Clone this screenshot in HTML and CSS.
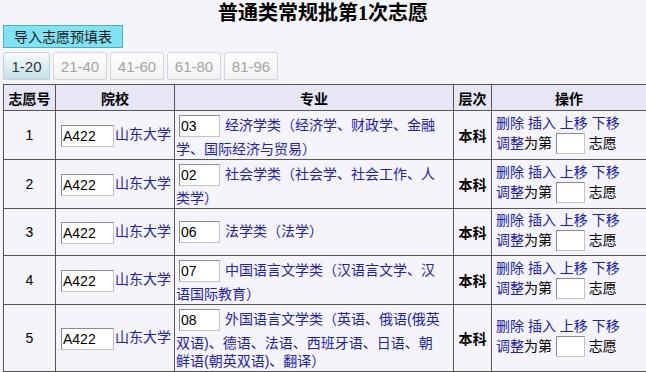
FILE: index.html
```html
<!DOCTYPE html>
<html lang="zh-CN">
<head>
<meta charset="utf-8">
<title>普通类常规批第1次志愿</title>
<link rel="stylesheet" href="styles.css">
</head>
<body>
<h1 class="title">普通类常规批第1次志愿</h1>
<button class="import" type="button">导入志愿预填表</button>
<div class="tabs">
  <div class="tab active">1-20</div>
  <div class="tab">21-40</div>
  <div class="tab">41-60</div>
  <div class="tab">61-80</div>
  <div class="tab">81-96</div>
</div>
<table class="grid">
  <colgroup>
    <col class="w-no"><col class="w-school"><col class="w-major"><col class="w-level"><col class="w-op">
  </colgroup>
  <thead>
    <tr><th>志愿号</th><th>院校</th><th>专业</th><th>层次</th><th>操作</th></tr>
  </thead>
  <tbody>
    <tr>
      <td class="c-no">1</td>
      <td class="c-school"><input class="in-school" value="A422"><a href="#" class="lnk">山东大学</a></td>
      <td class="c-major"><input class="in-major" value="03"><a href="#" class="lnk">经济学类（经济学、财政学、金融学、国际经济与贸易）</a></td>
      <td class="c-level">本科</td>
      <td class="c-op"><a href="#" class="lnk">删除</a> <a href="#" class="lnk">插入</a> <a href="#" class="lnk">上移</a> <a href="#" class="lnk">下移</a><br><a href="#" class="lnk">调整</a>为第 <input class="in-pos"> 志愿</td>
    </tr>
    <tr>
      <td class="c-no">2</td>
      <td class="c-school"><input class="in-school" value="A422"><a href="#" class="lnk">山东大学</a></td>
      <td class="c-major"><input class="in-major" value="02"><a href="#" class="lnk">社会学类（社会学、社会工作、人类学）</a></td>
      <td class="c-level">本科</td>
      <td class="c-op"><a href="#" class="lnk">删除</a> <a href="#" class="lnk">插入</a> <a href="#" class="lnk">上移</a> <a href="#" class="lnk">下移</a><br><a href="#" class="lnk">调整</a>为第 <input class="in-pos"> 志愿</td>
    </tr>
    <tr>
      <td class="c-no">3</td>
      <td class="c-school"><input class="in-school" value="A422"><a href="#" class="lnk">山东大学</a></td>
      <td class="c-major"><input class="in-major" value="06"><a href="#" class="lnk">法学类（法学）</a></td>
      <td class="c-level">本科</td>
      <td class="c-op"><a href="#" class="lnk">删除</a> <a href="#" class="lnk">插入</a> <a href="#" class="lnk">上移</a> <a href="#" class="lnk">下移</a><br><a href="#" class="lnk">调整</a>为第 <input class="in-pos"> 志愿</td>
    </tr>
    <tr>
      <td class="c-no">4</td>
      <td class="c-school"><input class="in-school" value="A422"><a href="#" class="lnk">山东大学</a></td>
      <td class="c-major"><input class="in-major" value="07"><a href="#" class="lnk">中国语言文学类（汉语言文学、汉语国际教育）</a></td>
      <td class="c-level">本科</td>
      <td class="c-op"><a href="#" class="lnk">删除</a> <a href="#" class="lnk">插入</a> <a href="#" class="lnk">上移</a> <a href="#" class="lnk">下移</a><br><a href="#" class="lnk">调整</a>为第 <input class="in-pos"> 志愿</td>
    </tr>
    <tr>
      <td class="c-no">5</td>
      <td class="c-school"><input class="in-school" value="A422"><a href="#" class="lnk">山东大学</a></td>
      <td class="c-major"><input class="in-major" value="08"><a href="#" class="lnk">外国语言文学类（英语、俄语(俄英双语)、德语、法语、西班牙语、日语、朝鲜语(朝英双语)、翻译）</a></td>
      <td class="c-level">本科</td>
      <td class="c-op"><a href="#" class="lnk">删除</a> <a href="#" class="lnk">插入</a> <a href="#" class="lnk">上移</a> <a href="#" class="lnk">下移</a><br><a href="#" class="lnk">调整</a>为第 <input class="in-pos"> 志愿</td>
    </tr>
  </tbody>
</table>
</body>
</html>
```
FILE: styles.css
```css
* { box-sizing: border-box; }
html { overflow: hidden; }
html, body { margin: 0; }
body {
  background: #f4f4fa;
  padding: 0 3px;
  font-family: "Liberation Sans", "Noto Sans CJK SC", sans-serif;
  font-size: 14px;
  color: #000;
}
.title {
  margin: 0;
  height: 25px;
  line-height: 27px;
  text-align: center;
  font-size: 20px;
  font-weight: bold;
  font-family: "Liberation Serif", "Noto Sans CJK SC", serif;
}
.import {
  display: block;
  margin: 0;
  padding: 0;
  width: 120px;
  height: 23px;
  background: #80e2f2;
  border: 1px solid #4ab0c6;
  font-family: "Noto Sans CJK SC", sans-serif;
  font-size: 14px;
  line-height: 21px;
  color: #1a1a1a;
  text-align: center;
}
.tabs {
  display: flex;
  gap: 3px;
  margin-top: 4px;
  height: 28px;
}
.tab {
  width: 54px;
  height: 28px;
  border: 1px solid #d6d6d6;
  border-radius: 3px 3px 0 0;
  background: linear-gradient(#fefefe, #f1f1f1);
  color: #a4a4a4;
  display: flex;
  align-items: center;
  justify-content: center;
  font-size: 15px;
}
.tab.active {
  width: 47px;
  background: linear-gradient(#f6fafb, #c6e0e8);
  border-color: #bcd2da;
  color: #333;
}
.grid {
  border-collapse: collapse;
  table-layout: fixed;
  width: 643px;
  margin-top: 4px;
}
.w-no { width: 52px; }
.w-school { width: 119px; }
.w-major { width: 279px; }
.w-level { width: 38px; }
.w-op { width: 155px; }
.grid th, .grid td {
  border: 1px solid #555;
  vertical-align: middle;
}
.grid th {
  height: 26px;
  padding: 0;
  background: #e6e6f5;
  font-weight: bold;
  font-size: 14px;
  text-align: center;
  font-family: "Noto Sans CJK SC", sans-serif;
}
.lnk {
  color: #1e23a8;
  text-decoration: none;
}
.c-no {
  text-align: center;
  padding: 0;
}
.c-school {
  padding: 0 1px;
  white-space: nowrap;
}
.c-major {
  padding: 1px 10px 1px 1px;
  line-height: 18px;
}
.c-level {
  text-align: center;
  font-weight: bold;
  padding: 0;
}
.c-op {
  padding: 2px 2px 2px 4px;
  line-height: 18px;
  white-space: nowrap;
}
input {
  font-family: "Liberation Sans", sans-serif;
  font-size: 14px;
  color: #000;
  background: #fff;
  border: 1px solid #8c8c8c;
  border-right-color: #c4c4c4;
  border-bottom-color: #c4c4c4;
  padding: 0 1px;
  vertical-align: middle;
  border-radius: 0;
}
.in-school {
  width: 53px;
  height: 22px;
  margin: 0 1px 0 4px;
}
.in-major {
  width: 41px;
  height: 22px;
  margin: 3px 5px 3px 3px;
}
.in-pos {
  width: 29px;
  height: 21px;
  margin: 1px 0 2px;
}
```
